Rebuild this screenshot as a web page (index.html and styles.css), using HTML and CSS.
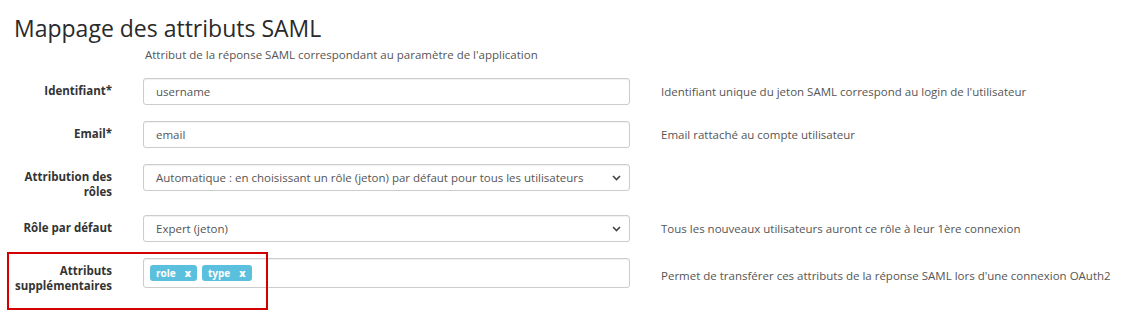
FILE: index.html
```html
<!DOCTYPE html>
<html lang="fr">
<head>
  <meta charset="UTF-8" />
  <title>Mappage des attributs SAML</title>
  <meta name="viewport" content="width=device-width, initial-scale=1.0" />
  <link rel="stylesheet" href="styles.css">
</head>
<body>

<div class="panel">
  <h2>Mappage des attributs SAML</h2>
  <p class="intro">Attribut de la réponse SAML correspondant au paramètre de l'application</p>

  <form class="mapping-form">
    <div class="row">
      <label for="login">Identifiant*</label>
      <input type="text" id="login" value="username" />
      <span class="help">Identifiant unique du jeton SAML correspond au login de l'utilisateur</span>
    </div>

    <div class="row">
      <label for="mail">Email*</label>
      <input type="text" id="mail" value="email" />
      <span class="help">Email rattaché au compte utilisateur</span>
    </div>

    <div class="row">
      <label>Attribution des rôles</label>
      <div class="select">
        <span>Automatique : en choisissant un rôle (jeton) par défaut pour tous les utilisateurs</span>
        <svg class="caret" width="9" height="6" viewBox="0 0 9 6"><path d="M1 1l3.5 3.5L8 1" fill="none" stroke="#444" stroke-width="1.6"/></svg>
      </div>
      <span class="help"></span>
    </div>

    <div class="row">
      <label>Rôle par défaut</label>
      <div class="select">
        <span>Expert (jeton)</span>
        <svg class="caret" width="9" height="6" viewBox="0 0 9 6"><path d="M1 1l3.5 3.5L8 1" fill="none" stroke="#444" stroke-width="1.6"/></svg>
      </div>
      <span class="help">Tous les nouveaux utilisateurs auront ce rôle à leur 1ère connexion</span>
    </div>

    <div class="row highlighted">
      <label>Attributs supplémentaires</label>
      <div class="tags-input">
        <span class="tag">role <b>x</b></span>
        <span class="tag">type <b>x</b></span>
      </div>
      <span class="help">Permet de transférer ces attributs de la réponse SAML lors d'une connexion OAuth2</span>
      <div class="highlight-box"></div>
    </div>
  </form>
</div>

</body>
</html>
```

FILE: styles.css
```css
body {
  margin: 0;
  font-family: "Open Sans", "Noto Sans", sans-serif;
  font-size: 11.5px;
  color: #333;
  background: #fff;
}

.panel {
  padding: 12px 14px;
}

h2 {
  margin: 0;
  font-size: 23px;
  font-weight: 400;
  line-height: 32px;
  color: #2a2a2a;
}

.intro {
  margin: 3px 0 0 131px;
  font-size: 11.5px;
  line-height: 16px;
  color: #555;
}

.mapping-form {
  margin-top: 15px;
}

.row {
  position: relative;
  display: grid;
  grid-template-columns: 98px 487px 1fr;
  column-gap: 31px;
  align-items: start;
  margin-bottom: 16px;
}

label {
  padding-top: 5px;
  text-align: right;
  font-weight: 700;
  font-size: 11.5px;
  line-height: 15px;
  color: #333;
}

input, .select, .tags-input {
  box-sizing: border-box;
  height: 27px;
  padding: 0 12px;
  border: 1px solid #ccc;
  border-radius: 3px;
  font-family: inherit;
  font-size: 11.5px;
  color: #555;
  background: #fff;
  box-shadow: inset 0 1px 1px rgba(0, 0, 0, 0.06);
}

.select {
  display: flex;
  align-items: center;
  justify-content: space-between;
  padding-right: 8px;
}

.tags-input {
  height: 30px;
  display: flex;
  align-items: center;
  gap: 5px;
  padding: 0 6px;
}

.tag {
  display: inline-flex;
  align-items: center;
  gap: 9px;
  height: 16px;
  padding: 0 6px;
  border-radius: 3px;
  background: #5bc0de;
  color: #fff;
  font-weight: 700;
  font-size: 10px;
}

.help {
  align-self: center;
  white-space: nowrap;
  font-size: 11.5px;
  color: #555;
}

.highlight-box {
  position: absolute;
  left: -7px;
  top: -6px;
  width: 261px;
  height: 58px;
  border: 2px solid #d40000;
  box-sizing: border-box;
}
```
